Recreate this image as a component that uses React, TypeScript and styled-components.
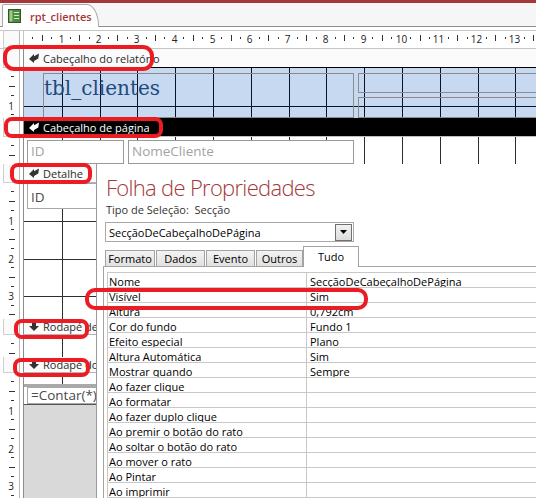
import React from "react";
import styled, { createGlobalStyle, css } from "styled-components";

const GlobalStyle = createGlobalStyle`
  html, body { margin: 0; padding: 0; background: #fff; }
  body { font-family: "Open Sans", "Liberation Sans", sans-serif; }
  #root { width: 536px; height: 498px; overflow: hidden; }
`;

const Q = 37.8 / 4;

const Page = styled.div`
  position: relative;
  width: 536px;
  height: 498px;
  overflow: hidden;
  display: flex;
  flex-direction: column;
  background: #fff;
  font-family: "Open Sans", "Liberation Sans", sans-serif;
`;

const TitleStrip = styled.div`
  height: 3px;
  flex: none;
  background: #a4373a;
`;

const DocTabBar = styled.div`
  height: 23px;
  flex: none;
  background: #f6f6f6;
  border-bottom: 1px solid #8f8f8f;
  padding-left: 2px;
  display: flex;
  align-items: flex-end;
`;

const DocTab = styled.div`
  height: 23px;
  margin-bottom: -1px;
  box-sizing: border-box;
  width: 97px;
  background: #fff;
  border: 1px solid #a9a9a9;
  border-bottom: none;
  border-top-left-radius: 2px;
  border-top-right-radius: 12px 22px;
  display: flex;
  align-items: center;
  gap: 9px;
  padding-left: 5px;
  font-size: 11px;
  font-weight: 600;
  color: #a4373a;
`;

const Designer = styled.div`
  flex: 1;
  display: flex;
  flex-direction: column;
  margin-top: 3px;
  min-height: 0;
`;

const RulerRow = styled.div`
  display: flex;
  flex: none;
  height: 19px;
  box-sizing: border-box;
  border-top: 1px solid #c6c6c6;
  border-bottom: 1px solid #c6c6c6;
`;

const Row = styled.div<{ $h?: number }>`
  display: flex;
  ${(p) =>
    p.$h
      ? css`
          height: ${p.$h}px;
          flex: none;
        `
      : css`
          flex: 1;
          min-height: 0;
        `}
`;

const Gutter = styled.div`
  width: 20px;
  margin-right: 3px;
  flex: none;
  box-sizing: border-box;
  border-right: 1px solid #b9b9b9;
  overflow: hidden;
  background: #fff;
`;

const GutterBox = styled.div`
  margin-left: 3px;
  height: 100%;
  box-sizing: border-box;
  border-left: 1px solid #cfcfcf;
  border-bottom: 1px solid #cfcfcf;
  background: #fafafa;
`;

const RulerSvg = styled.svg`
  display: block;
  flex: none;
`;

const HRulerWrap = styled.div`
  flex: 1;
  border-left: 1px solid #c6c6c6;
  overflow: hidden;
`;

const Bar = styled.div<{ $selected?: boolean; $edge?: string }>`
  flex: 1;
  display: flex;
  align-items: center;
  gap: 4px;
  padding-left: 5px;
  box-sizing: border-box;
  border-left: 1px solid #8c8c8c;
  border-bottom: 1px solid ${(p) => p.$edge || "#b4b4b4"};
  background: ${(p) => (p.$selected ? "#000" : "#fbfbfb")};
  color: ${(p) => (p.$selected ? "#fff" : "#2b2b2b")};
  font-size: 11px;
  white-space: nowrap;
  overflow: hidden;
`;

const gridLines = (color: string) => css`
  background-image: repeating-linear-gradient(
      90deg,
      transparent 0px,
      transparent 36.8px,
      ${color} 36.8px,
      ${color} 37.8px
    ),
    repeating-linear-gradient(
      180deg,
      transparent 0px,
      transparent 36.8px,
      ${color} 36.8px,
      ${color} 37.8px
    );
  background-position: 1px 1px;
`;

const Canvas = styled.div<{ $tone: "blue" | "white"; $bottom?: string }>`
  position: relative;
  flex: 1;
  box-sizing: border-box;
  border-left: 1px solid #8c8c8c;
  overflow: hidden;
  background-color: ${(p) => (p.$tone === "blue" ? "#c6d9f0" : "#fff")};
  ${(p) => gridLines(p.$tone === "blue" ? "#0a1428" : "#2e2e2e")};
  ${(p) => p.$bottom && css`border-bottom: 1px solid ${p.$bottom};`}
`;

const FooterColumn = styled.div`
  flex: 1;
  display: flex;
  flex-direction: column;
`;

const FooterCanvas = styled(Canvas)`
  flex: none;
  height: 32px;
`;

const GreyFill = styled.div`
  flex: 1;
  background: #d9d9d9;
  border-left: 1px solid #8c8c8c;
`;

const Control = styled.div<{ $x: number; $y: number; $w: number; $h: number }>`
  position: absolute;
  left: ${(p) => p.$x}px;
  top: ${(p) => p.$y}px;
  width: ${(p) => p.$w}px;
  height: ${(p) => p.$h}px;
  box-sizing: border-box;
  border: 1px solid #8c8c8c;
  white-space: nowrap;
  overflow: hidden;
`;

const TitleControl = styled(Control)`
  font-family: "DejaVu Serif", "Liberation Serif", serif;
  font-size: 20px;
  line-height: 24px;
  padding-top: 2px;
  color: #1f497d;
`;

const LabelControl = styled(Control)<{ $dim?: boolean; $lh?: number }>`
  background: #fff;
  font-size: 13.5px;
  line-height: ${(p) => p.$lh ?? 20}px;
  padding-left: 3px;
  color: ${(p) => (p.$dim ? "#a3a3a3" : "#4a4a4a")};
  border-color: ${(p) => (p.$dim ? "#9a9a9a" : "#a8a8a8")};
`;

const Band = styled.div`
  position: absolute;
  left: 0;
  right: 0;
  top: 11px;
  height: 3px;
  background: #a9a9a9;
`;

/* Property sheet */
const Panel = styled.aside`
  position: absolute;
  left: 96px;
  top: 164px;
  right: 0;
  bottom: 0;
  z-index: 5;
  background: #fff;
  border-left: 1px solid #9a9a9a;
  box-sizing: border-box;
  padding: 9px 0 0 8px;
  display: flex;
  flex-direction: column;
  overflow: hidden;
`;

const PanelTitle = styled.div`
  font-size: 22px;
  font-weight: 300;
  letter-spacing: -0.7px;
  line-height: 28px;
  height: 28px;
  margin-left: 1px;
  color: #a4373a;
  white-space: nowrap;
`;

const SelType = styled.div`
  margin-top: 1px;
  font-size: 11px;
  line-height: 16px;
  color: #333;
  white-space: pre;
  margin-left: 1px;
`;

const Combo = styled.div`
  margin-top: 4px;
  width: 249px;
  height: 23px;
  box-sizing: border-box;
  border: 1px solid #a8a8a8;
  display: flex;
  align-items: center;
  padding-left: 3px;
  font-size: 11px;
  color: #000;
`;

const ComboButton = styled.div`
  margin-left: auto;
  margin-right: 1px;
  width: 17px;
  height: 17px;
  box-sizing: border-box;
  border: 1px solid #707070;
  background: linear-gradient(#f2f2f2, #dcdcdc);
  display: flex;
  align-items: center;
  justify-content: center;
`;

const TabStrip = styled.div`
  margin-top: 4px;
  height: 21px;
  display: flex;
  align-items: flex-end;
  gap: 1px;
  position: relative;
  z-index: 2;
`;

const Tab = styled.div<{ $w: number; $active?: boolean }>`
  width: ${(p) => p.$w}px;
  height: ${(p) => (p.$active ? 21 : 16)}px;
  margin-left: ${(p) => (p.$active ? -1 : 0)}px;
  margin-bottom: ${(p) => (p.$active ? -1 : 0)}px;
  box-sizing: border-box;
  border: 1px solid #a3a3a3;
  border-bottom: none;
  background: ${(p) => (p.$active ? "#fff" : "linear-gradient(#f3f3f3, #e1e1e1)")};
  display: flex;
  align-items: center;
  justify-content: center;
  font-size: 11px;
  padding-bottom: ${(p) => (p.$active ? 2 : 0)}px;
  color: #000;
`;

const TabBody = styled.div`
  margin-left: -2px;
  flex: 1;
  box-sizing: border-box;
  border-top: 1px solid #a3a3a3;
  border-left: 1px solid #a3a3a3;
  padding: 5px 0 0 3px;
`;

const PropGrid = styled.div`
  display: grid;
  grid-template-columns: 199px 1fr;
  border-top: 1px solid #c8c8c8;
  border-left: 1px solid #c8c8c8;
`;

const Cell = styled.div<{ $name?: boolean }>`
  height: 15px;
  box-sizing: border-box;
  border-bottom: 1px solid #c8c8c8;
  ${(p) => p.$name && css`border-right: 1px solid #c8c8c8;`}
  padding-left: ${(p) => (p.$name ? 1 : 3)}px;
  font-size: 11px;
  line-height: 17px;
  color: #000;
  white-space: nowrap;
  overflow: hidden;
`;

const Annotations = styled.svg`
  position: absolute;
  left: 0;
  top: 0;
  z-index: 10;
  pointer-events: none;
`;

function VRuler({ height }: { height: number }) {
  const marks: React.ReactNode[] = [];
  for (let q = 1; q * Q < height + 2; q++) {
    const y = Math.round(q * Q) - 0.5;
    if (q % 4 === 0)
      marks.push(
        <text key={q} x={11} y={y + 4} textAnchor="middle" fontSize="10" fill="#222" fontFamily="Open Sans, sans-serif">
          {q / 4}
        </text>
      );
    else if (q % 2 === 0) marks.push(<line key={q} x1={9} x2={15} y1={y} y2={y} stroke="#333" />);
    else marks.push(<line key={q} x1={11} x2={14} y1={y} y2={y} stroke="#333" />);
  }
  return (
    <RulerSvg width={19} height={height}>
      {marks}
    </RulerSvg>
  );
}

function HRuler() {
  const marks: React.ReactNode[] = [];
  for (let q = 1; q <= 56; q++) {
    const x = Math.round(q * Q - 1.3) + 0.5;
    if (q % 4 === 0)
      marks.push(
        <text key={q} x={x} y={11.5} textAnchor="middle" fontSize="10" fill="#222" fontFamily="Open Sans, sans-serif">
          {q / 4}
        </text>
      );
    else if (q % 2 === 0) marks.push(<line key={q} x1={x} x2={x} y1={4} y2={10} stroke="#333" />);
    else marks.push(<line key={q} x1={x} x2={x} y1={6} y2={8} stroke="#333" />);
  }
  return (
    <RulerSvg width={513} height={17}>
      {marks}
    </RulerSvg>
  );
}

function HeaderIcon({ color }: { color: string }) {
  return (
    <RulerSvg width={10} height={10} viewBox="0 0 10 10">
      <path d="M0 6 L5 1 L5 3.2 L10 0.5 L9.3 5.5 L5 8 L5 10 Z" fill={color} />
    </RulerSvg>
  );
}

function FooterIcon({ color }: { color: string }) {
  return (
    <RulerSvg width={10} height={9} viewBox="0 0 10 9">
      <path d="M3 0 H7 V4 H10 L5 9 L0 4 H3 Z" fill={color} />
    </RulerSvg>
  );
}

function ReportIcon() {
  return (
    <RulerSvg width={13} height={14} viewBox="0 0 13 14">
      <rect x="0.5" y="0.5" width="12" height="13" fill="#4f8a3c" stroke="#2d5a22" />
      <rect x="1.5" y="1.5" width="3" height="11" fill="#9cc98a" />
      <rect x="6" y="3" width="5" height="1" fill="#d7ebcf" />
      <rect x="6" y="6" width="5" height="1" fill="#d7ebcf" />
      <rect x="6" y="9" width="5" height="1" fill="#d7ebcf" />
    </RulerSvg>
  );
}

function SectionBar({
  label,
  kind,
  selected,
  edge,
  h,
}: {
  label: string;
  kind: "header" | "footer";
  selected?: boolean;
  edge?: string;
  h: number;
}) {
  const c = selected ? "#fff" : "#333";
  return (
    <Row $h={h}>
      <Gutter>
        <GutterBox />
      </Gutter>
      <Bar $selected={selected} $edge={edge}>
        {kind === "header" ? <HeaderIcon color={c} /> : <FooterIcon color={c} />}
        <span>{label}</span>
      </Bar>
    </Row>
  );
}

const props: [string, string][] = [
  ["Nome", "SecçãoDeCabeçalhoDePágina"],
  ["Visível", "Sim"],
  ["Altura", "0,792cm"],
  ["Cor do fundo", "Fundo 1"],
  ["Efeito especial", "Plano"],
  ["Altura Automática", "Sim"],
  ["Mostrar quando", "Sempre"],
  ["Ao fazer clique", ""],
  ["Ao formatar", ""],
  ["Ao fazer duplo clique", ""],
  ["Ao premir o botão do rato", ""],
  ["Ao soltar o botão do rato", ""],
  ["Ao mover o rato", ""],
  ["Ao Pintar", ""],
  ["Ao imprimir", ""],
];

const tabs: [string, number][] = [
  ["Formato", 50],
  ["Dados", 49],
  ["Evento", 49],
  ["Outros", 47],
];

const marks = [
  { x: 5, y: 47, w: 147, h: 22, r: 9 },
  { x: 6, y: 119, w: 155, h: 17, r: 6 },
  { x: 12, y: 165, w: 78, h: 17, r: 6 },
  { x: 87, y: 290, w: 279, h: 18, r: 8 },
  { x: 16, y: 321, w: 71, h: 16, r: 6 },
  { x: 15, y: 360, w: 73, h: 15, r: 6 },
];

export default function App() {
  return (
    <>
      <GlobalStyle />
      <Page>
        <TitleStrip />
        <DocTabBar>
          <DocTab>
            <ReportIcon />
            <span>rpt_clientes</span>
          </DocTab>
        </DocTabBar>
        <Designer>
          <RulerRow>
            <Gutter>
              <GutterBox />
            </Gutter>
            <HRulerWrap>
              <HRuler />
            </HRulerWrap>
          </RulerRow>

          <SectionBar h={19} kind="header" label="Cabeçalho do relatório" edge="#000" />
          <Row $h={50}>
            <Gutter>
              <VRuler height={50} />
            </Gutter>
            <Canvas $tone="blue">
              <TitleControl $x={19} $y={5} $w={311} $h={45}>
                tbl_clientes
              </TitleControl>
              <Control $x={334} $y={5} $w={200} $h={20} />
              <Control $x={334} $y={29} $w={200} $h={21} />
            </Canvas>
          </Row>

          <SectionBar h={19} kind="header" label="Cabeçalho de página" selected edge="#c0c0c0" />
          <Row $h={27}>
            <Gutter>
              <VRuler height={27} />
            </Gutter>
            <Canvas $tone="white">
              <LabelControl $dim $x={3} $y={3} $w={97} $h={24}>
                ID
              </LabelControl>
              <LabelControl $dim $x={104} $y={3} $w={226} $h={24}>
                NomeCliente
              </LabelControl>
            </Canvas>
          </Row>

          <SectionBar h={19} kind="header" label="Detalhe" />
          <Row $h={136}>
            <Gutter>
              <VRuler height={136} />
            </Gutter>
            <Canvas $tone="white">
              <LabelControl $x={3} $y={0} $w={100} $h={26} $lh={27}>
                ID
              </LabelControl>
            </Canvas>
          </Row>

          <SectionBar h={16} kind="footer" label="Rodapé de página" />
          <Row $h={22}>
            <Gutter>
              <VRuler height={22} />
            </Gutter>
            <Canvas $tone="white" />
          </Row>

          <SectionBar h={16} kind="footer" label="Rodapé do relatório" />
          <Row>
            <Gutter>
              <VRuler height={125} />
            </Gutter>
            <FooterColumn>
              <FooterCanvas $tone="white" $bottom="#555">
                <Band />
                <LabelControl $x={3} $y={14} $w={100} $h={17} $lh={15}>
                  =Contar(*)
                </LabelControl>
              </FooterCanvas>
              <GreyFill />
            </FooterColumn>
          </Row>
        </Designer>

        <Panel>
          <PanelTitle>Folha de Propriedades</PanelTitle>
          <SelType>Tipo de Seleção:  Secção</SelType>
          <Combo>
            <span>SecçãoDeCabeçalhoDePágina</span>
            <ComboButton>
              <RulerSvg width={7} height={4} viewBox="0 0 7 4">
                <path d="M0 0 H7 L3.5 4 Z" fill="#000" />
              </RulerSvg>
            </ComboButton>
          </Combo>
          <TabStrip>
            {tabs.map(([t, w]) => (
              <Tab key={t} $w={w}>
                {t}
              </Tab>
            ))}
            <Tab $w={56} $active>
              Tudo
            </Tab>
          </TabStrip>
          <TabBody>
            <PropGrid>
              {props.map(([n, v]) => (
                <React.Fragment key={n}>
                  <Cell $name>{n}</Cell>
                  <Cell>{v}</Cell>
                </React.Fragment>
              ))}
            </PropGrid>
          </TabBody>
        </Panel>

        <Annotations width={536} height={498}>
          {marks.map((m, i) => (
            <rect key={i} x={m.x} y={m.y} width={m.w} height={m.h} rx={m.r} fill="none" stroke="#ec1c24" strokeWidth={4} />
          ))}
        </Annotations>
      </Page>
    </>
  );
}
